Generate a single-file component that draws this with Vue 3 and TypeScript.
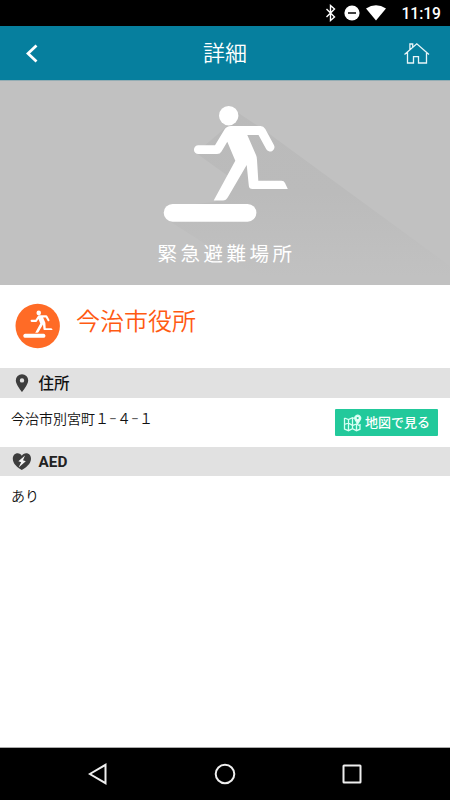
<script setup lang="ts">
interface Section {
  id: string
  title: string
  body: string
  hasMap: boolean
}

const sections: Section[] = [
  { id: 'address', title: '住所', body: '今治市別宮町１−４−１', hasMap: true },
  { id: 'aed', title: 'AED', body: 'あり', hasMap: false },
]

const runner =
  'M231 126H260.500Q263.500 126 265.300 129L273.900 145A4.350 4.350 0 0 1 266.300 149.300L258.500 135H247.300L256 155Q257 157 257 160L258.300 180.700H281.500Q284 180.700 285 183L287.800 189H252.500Q249 189 248.800 185.500L246.700 165L228 197Q226 200.500 223 200.500H213.700L235.300 160.700L227.300 141.700L221.500 151.500Q220 154 217 154H198.300A4.350 4.350 0 0 1 198.300 145.300H215L224.500 129.500Q226.500 126 231 126Z'
</script>

<template>
  <div class="screen">
    <div class="status">
      <svg class="bt" width="12" height="18" viewBox="0 0 12 18"><path d="M1.500 5l8 8-4 3.500V1.500L9.500 5l-8 8" /></svg>
      <svg width="16" height="16" viewBox="0 0 16 16"><circle cx="8" cy="8" r="7.600" fill="#fff" /><path d="M4 8h8" stroke="#000" stroke-width="1.500" /></svg>
      <svg class="wifi" width="20" height="16" viewBox="0 0 20 16"><path d="M0 3.500Q10-3 20 3.500L10 15.500Z" fill="#fff" /></svg>
      <span class="time">11:19</span>
    </div>

    <header class="bar">
      <svg class="back" width="12" height="20" viewBox="0 0 12 20"><path d="M10.500 2.500L2 10.500l8.500 8" /></svg>
      <h1>詳細</h1>
      <svg class="home" width="28" height="24" viewBox="0 0 28 24"><path d="M1.500 13.500L13.800 2.800 26 13.500M4.500 11v11h6v-6.300h5v6.300h8V11M6.900 8.500V3h2.800v3" /></svg>
    </header>

    <div class="hero">
      <svg class="art" width="450" height="154" viewBox="0 81 450 154">
        <path :d="runner" />
        <circle cx="228.700" cy="115.700" r="9.700" />
        <rect x="163.700" y="204" width="92.700" height="17.700" rx="8.850" />
      </svg>
      <svg class="shade" width="450" height="204" viewBox="0 81 450 204">
        <defs>
          <linearGradient id="fade" gradientUnits="userSpaceOnUse" x1="240" y1="110" x2="240" y2="276">
            <stop offset="0" stop-color="#bababa" />
            <stop offset="0.500" stop-color="#bbbbbb" />
            <stop offset="1" stop-color="#c1c1c1" />
          </linearGradient>
        </defs>
        <path d="M237 112L264 130L450 266V285H270L166 219V207L215 202L235 181L196 153L225 128Z" fill="url(#fade)" />
      </svg>
      <div class="caption">緊急避難場所</div>
    </div>

    <div class="place">
      <svg class="badge" width="46" height="46" viewBox="0 0 46 46">
        <circle cx="22.700" cy="23" r="22.200" fill="#ff6b26" />
        <g transform="translate(-30 -17.300) scale(.235)">
          <path :d="runner" />
          <circle cx="228.700" cy="115.700" r="9.700" />
          <rect x="163.700" y="204" width="92.700" height="17.700" rx="7" />
        </g>
      </svg>
      <h2>今治市役所</h2>
    </div>

    <section v-for="s in sections" :key="s.id" :class="s.id">
      <h3>
        <svg v-if="s.hasMap" width="20" height="20" viewBox="0 0 20 20"><path fill-rule="evenodd" d="M10 1.200a6.200 6.200 0 0 0-6.200 6.200C3.800 11.500 10 19 10 19s6.200-7.500 6.200-11.600A6.200 6.200 0 0 0 10 1.200Zm0 4a2.200 2.200 0 1 1 0 4.400A2.200 2.200 0 0 1 10 5.200Z" /></svg>
        <svg v-else width="20" height="20" viewBox="0 0 20 20"><path d="M9.800 18C5.500 15.500 .8 12 .8 6.800 .8 3.500 3 1.300 5.600 1.300 7.500 1.300 9 2.300 9.800 3.800 10.700 2.300 12.200 1.300 14.200 1.300 17 1.300 19 3.500 19 6.800 19 12 14 15.500 9.800 18Z" /><path d="M13 3.500L6.400 9.200 9.200 10.300 6.600 15.500 13.800 9.200 11 8.200Z" fill="#f4f4f4" /></svg>
        <span>{{ s.title }}</span>
      </h3>
      <div class="row">
        <p>{{ s.body }}</p>
        <button v-if="s.hasMap" type="button">
          <svg width="19" height="18" viewBox="0 0 19 18"><path d="M1.500 4l4 1.600L9.500 3.700 11.500 4.500M1.500 4v11l4 1.700 4-2 4 2 3.500-1.500V10M5.500 5.600v11M9.500 3.700v11M13.500 9.500v7M1.500 10.500L5.500 9l4 2.500 4-1.500 3.500 2" /><path d="M14.700 9.800L12.300 5.800a2.900 2.900 0 1 1 4.800 0Z" fill="#e9fff8" /><circle cx="14.700" cy="4.100" r="1.100" fill="#22c99b" stroke="none" /></svg>
          <span>地図で見る</span>
        </button>
      </div>
    </section>

    <nav>
      <svg width="20" height="22" viewBox="0 0 20 22"><path d="M17.500 1.800v18.400L1.800 11Z" /></svg>
      <svg width="22" height="22" viewBox="0 0 22 22"><circle cx="11" cy="11" r="9.300" /></svg>
      <svg width="20" height="20" viewBox="0 0 20 20"><rect x="1.500" y="1.500" width="17" height="17" rx=".5" /></svg>
    </nav>
  </div>
</template>

<style>
body {
  margin: 0;
  background: #fff;
}
</style>

<style scoped>
.screen {
  width: 450px;
  height: 800px;
  display: flex;
  flex-direction: column;
  overflow: hidden;
  background: #fff;
  color: #111;
  font-family: Roboto, 'Noto Sans CJK JP', sans-serif;
}
svg {
  display: block;
  flex: none;
}
h1, h2, h3, p {
  margin: 0;
}
.status {
  flex: none;
  height: 26px;
  box-sizing: border-box;
  padding-right: 9px;
  display: flex;
  align-items: center;
  justify-content: flex-end;
  background: #000;
  color: #fff;
}
.bt {
  margin-right: 7px;
  fill: none;
  stroke: #fff;
  stroke-width: 1.4;
}
.wifi {
  margin-left: 6px;
}
.time {
  margin-left: 15px;
  padding-top: 2px;
  font-size: 15.600px;
  font-weight: 500;
  line-height: 24px;
}
.bar {
  flex: none;
  height: 55px;
  box-sizing: border-box;
  padding: 0 19px 0 26px;
  border-bottom: 1px solid #94adb4;
  display: grid;
  grid-template-columns: 28px 1fr 28px;
  align-items: center;
  background: #067f9e;
  color: #fff;
}
.back {
  fill: none;
  stroke: #fff;
  stroke-width: 2.8;
}
.home {
  fill: none;
  stroke: #e8f5f8;
  stroke-width: 1.3;
}
.bar h1 {
  padding: 2px 7px 0 0;
  text-align: center;
  font-size: 22px;
  font-weight: 350;
  line-height: 52px;
}
.hero {
  flex: none;
  height: 204px;
  display: grid;
  grid-template-rows: 154px 50px;
  background: #c1c1c1;
}
.art {
  grid-area: 1 / 1;
  z-index: 1;
  fill: #fff;
}
.shade {
  grid-area: 1 / 1 / 3 / 2;
}
.caption {
  grid-area: 2 / 1;
  z-index: 1;
  padding: 1px 0 0 3px;
  text-align: center;
  font-size: 19.500px;
  line-height: 38px;
  letter-spacing: 3.500px;
  color: #fff;
}
.place {
  flex: none;
  height: 83px;
  box-sizing: border-box;
  padding: 18px 0 0 15px;
  display: flex;
  align-items: flex-start;
  gap: 15px;
}
.badge {
  fill: #fff;
}
.place h2 {
  padding-top: 1px;
  font-size: 24px;
  font-weight: 350;
  line-height: 36px;
  color: #ff5a12;
}
h3 {
  height: 30px;
  padding-left: 12px;
  display: flex;
  align-items: center;
  gap: 6.500px;
  background: #e1e1e1;
  font-size: 15.500px;
  font-weight: 500;
  line-height: 30px;
  color: #111;
}
h3 svg {
  fill: #3d3d3d;
}
.address h3 span {
  padding-top: 2px;
  line-height: 28px;
}
.aed h3 {
  height: 29px;
  font-size: 15.300px;
  font-weight: 700;
  color: #222;
}
.row {
  height: 49px;
  box-sizing: border-box;
  padding: 11px 12px 0 11px;
  display: flex;
  align-items: flex-start;
  justify-content: space-between;
}
.aed .row {
  padding-top: 10px;
}
.row p {
  font-size: 14px;
  font-weight: 350;
  line-height: 20px;
}
button {
  width: 103px;
  height: 27px;
  box-sizing: border-box;
  padding: 0 0 0 8px;
  border: 0;
  border-radius: 1px;
  display: flex;
  align-items: center;
  gap: 3px;
  background: #22c99b;
  color: #fff;
  font: 500 13px/25px 'Noto Sans CJK JP', sans-serif;
  white-space: nowrap;
}
button span {
  padding-bottom: 2px;
}
button svg {
  fill: none;
  stroke: #d5fff3;
  stroke-width: 1.3;
}
nav {
  flex: none;
  height: 53px;
  box-sizing: border-box;
  margin-top: auto;
  padding: 0 88px;
  border-top: 1px solid #aaa;
  display: flex;
  align-items: center;
  justify-content: space-between;
  background: #000;
}
nav svg {
  fill: none;
  stroke: #eee;
  stroke-width: 2;
}
</style>
